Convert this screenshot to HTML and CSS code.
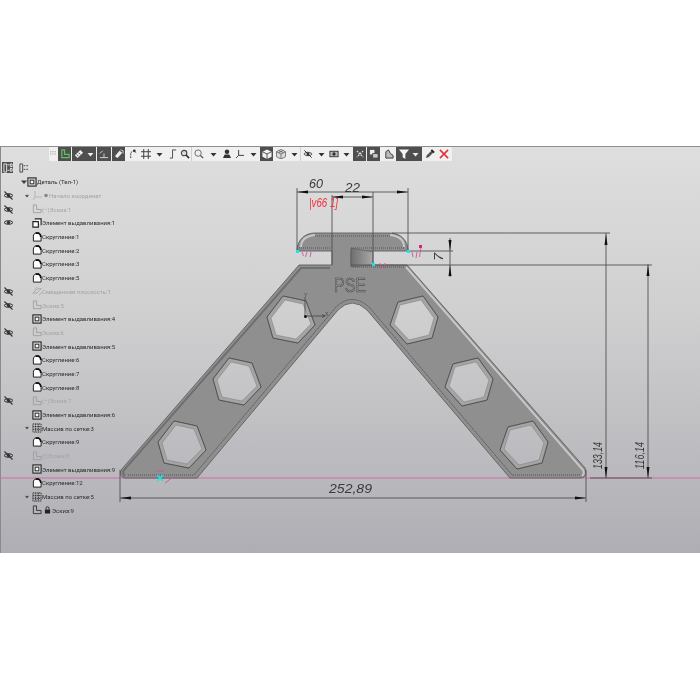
FILE: index.html
```html
<!DOCTYPE html>
<html lang="ru">
<head>
<meta charset="utf-8">
<title>Деталь</title>
<link rel="stylesheet" href="styles.css">
</head>
<body>
<svg class="defs" width="0" height="0" aria-hidden="true">
  <defs>
    <linearGradient id="slot-grad" x1="0" x2="1" y1="0" y2="0"><stop offset="0" stop-color="#6e6e6e"/><stop offset="1" stop-color="#a9a9a9"/></linearGradient>
    <symbol id="i-ext" viewBox="0 0 11 11"><rect x="1" y="1" width="9" height="9" fill="#d8d8d8" stroke="#222" stroke-width="1.200"/><rect x="3.500" y="3.500" width="4" height="4" fill="#fff" stroke="#222"/></symbol>
    <symbol id="i-ext1" viewBox="0 0 11 11"><path d="M3 1h7v7M1 4h6v6H1z" fill="#fff" stroke="#222" stroke-width="1.300"/></symbol>
    <symbol id="i-fil" viewBox="0 0 11 11"><path d="M1.500 10V4.500C1.500 2.500 3 1 5 1h2.500C9 2 10 3.500 10 5.500V10z" fill="#fff" stroke="#222" stroke-width="1.100"/><path d="M4 1.300h3.500C9 2 9.700 3.500 9.700 5.500" fill="none" stroke="#111" stroke-width="1.800"/></symbol>
    <symbol id="i-sk" viewBox="0 0 11 11"><path d="M1.500 1v8.500h8.500V6H5V1z" fill="none" stroke="currentColor" stroke-width="1"/></symbol>
    <symbol id="i-eye" viewBox="0 0 11 9"><path d="M1 4.500C3 2 8 2 10 4.500 8 7 3 7 1 4.500z" fill="none" stroke="#333"/><circle cx="5.500" cy="4.500" r="1.700" fill="#333"/></symbol>
    <symbol id="i-noeye" viewBox="0 0 11 9"><path d="M1 4.500C3 2 8 2 10 4.500 8 7 3 7 1 4.500z" fill="none" stroke="#333"/><circle cx="5.500" cy="4.500" r="1.700" fill="#333"/><path d="M1.500 .5 9.500 8.500" stroke="#333" stroke-width="1.100"/></symbol>
    <symbol id="i-grid" viewBox="0 0 11 11"><path d="M1 1h9v9H1zM4 1v9M7 1v9M1 4h9M1 7h9" fill="none" stroke="#333" stroke-dasharray="1.500 .7"/></symbol>
    <symbol id="t-caret" viewBox="0 0 7 7"><path d="M.5 2h6L3.500 5.500z" fill="#333"/></symbol>
    <symbol id="t-w-caret" viewBox="0 0 7 7"><path d="M.5 2h6L3.500 5.500z" fill="#eee"/></symbol>
    <symbol id="t-mag" viewBox="0 0 11 11"><circle cx="4.500" cy="4.500" r="3" fill="#ddd" stroke="#444" stroke-width="1.200"/><path d="M6.500 6.500 10 10" stroke="#333" stroke-width="1.800"/></symbol>
    <g id="hex-a" class="hex">
      <path class="hex-wall" fill-rule="evenodd" d="M-8-24 15-19 24 5 7 23-18 18-24-3ZM-6-20 12-16 20 4 5 19-15 15-20-2Z"/>
      <polygon class="hex-edge" points="-8,-24 15,-19 24,5 7,23 -18,18 -24,-3"/>
      <polygon class="hex-in" points="-6,-20 12,-16 20,4 5,19 -15,15 -20,-2"/>
    </g>
    <g id="hex-b" class="hex">
      <path class="hex-wall" fill-rule="evenodd" d="M-16-18 9-24 24-3 18 18-7 24-24 5ZM-14-15 7-20 20-2 15 15-5 20-20 4Z"/>
      <polygon class="hex-edge" points="-16,-18 9,-24 24,-3 18,18 -7,24 -24,5"/>
      <polygon class="hex-in" points="-14,-15 7,-20 20,-2 15,15 -5,20 -20,4"/>
    </g>
  </defs>
</svg>

<main class="window">
  <svg class="canvas" viewBox="0 146 700 407" width="700" height="407">
    <path class="pink" d="M0 478H700"/>
    <path class="part" fill-rule="evenodd" d="M125 478Q119 477 121 470L299 265H332V251H297C297 240 305 233 315 233H390C400 233 408 240 408 251H351V265H407L585 468Q588 477 581 478H510L367 310Q352 296 338 310L197 478ZM283 296 306 301 315 325 298 343 273 338 267 317ZM229 358 252 363 261 387 244 405 219 400 213 379ZM174 421 197 426 206 450 189 468 164 463 158 442ZM398 302 423 296 438 317 432 338 407 344 390 325ZM453 364 478 358 493 379 487 400 462 406 445 387ZM508 427 533 421 548 442 542 463 517 469 500 450Z"/>
    <path class="band-dark" d="M125 476Q122 473 124 470L301 268H330"/>
    <path class="band-light" d="M406 267 583 470Q585 474 582 476"/>
    <path class="band-thin" d="M194 475 336 307Q352 292 369 307L513 476"/>
    <path class="dots" d="M128 475H194M513 475H580M353 267H405M299 248H330M351 248H405M315 236H390"/>
    <path class="band-light" d="M301 247C301 240 306 236 315 235M404 247C404 240 399 236 390 235"/>
    <polygon class="slot" points="351,248 373,252 373,265 351,267"/>
    <use href="#hex-a" x="291" y="320"/>
    <use href="#hex-a" x="237" y="382"/>
    <use href="#hex-a" x="182" y="445"/>
    <use href="#hex-b" x="414" y="320"/>
    <use href="#hex-b" x="469" y="382"/>
    <use href="#hex-b" x="524" y="445"/>
    <text class="pse" x="334" y="292" textLength="32" lengthAdjust="spacingAndGlyphs">PSE</text>

    <path class="triad" d="M305 316V297M305 316H325M322 314.500l3 1.500-3 1.500"/>
    <circle class="triad-dot" cx="305.500" cy="316.500" r="1.500"/>
    <text class="triad-t" x="304" y="297">Y</text>
    <text class="triad-t" x="325" y="316">X</text>

    <path class="dim" d="M297 188V251M408 188V251M332 195V265M373 192V265M297 192H408M332 197H373"/>
    <path class="dim" d="M408 251H453M351 265H652M392 233H610M606 233V478M648 264V478M450 238V277M120 470V502M120 498H586M586 470V502M590 478H652"/>
    <path class="arrow" d="M297 192l11-1.500v3zM408 192l-11-1.500v3zM332 197l11-1.500v3zM373 197l-11-1.500v3zM606 234l-1.500 11h3zM606 478l-1.500-11h3zM648 265l-1.500 11h3zM648 478l-1.500-11h3zM450 251l-1.500-11h3zM450 265l-1.500 11h3zM120 498l11-1.500v3zM586 498l-11-1.500v3z"/>
    <text class="dimt" x="309" y="188" textLength="14" lengthAdjust="spacingAndGlyphs">60</text>
    <text class="dimt" x="345" y="192" textLength="15" lengthAdjust="spacingAndGlyphs">22</text>
    <text class="redt" x="309" y="207" textLength="29" lengthAdjust="spacingAndGlyphs">|v66 1]</text>
    <text class="dimt" x="329" y="493" textLength="43" lengthAdjust="spacingAndGlyphs">252,89</text>
    <text class="dimt" transform="translate(443 261) rotate(-90)" textLength="8" lengthAdjust="spacingAndGlyphs">7</text>
    <text class="dimt" transform="translate(602 469) rotate(-90)" textLength="27" lengthAdjust="spacingAndGlyphs">133,14</text>
    <text class="dimt" transform="translate(644 469) rotate(-90)" textLength="27" lengthAdjust="spacingAndGlyphs">116,14</text>

    <g class="marks">
      <path d="M302 252l1.500 4M307 252l-1.500 5M311 252l-1 5M380 263l1 6M385 263l-1 6M412 252l1 5M417 252l-1 6M421 247l-1.500 10M156 471h8M165 483l8-6"/>
      <rect class="mark-dot" x="419" y="245" width="3" height="3"/>
    </g>
    <rect class="cy" x="296" y="250" width="3" height="3"/>
    <rect class="cy" x="407" y="250" width="3" height="3"/>
    <rect class="cy" x="372" y="263" width="3" height="3"/>
    <path class="cyx" d="M157 475l6 6M163 475l-6 6"/>
  </svg>

  <div class="toolbar">
    <span class="tb w9"><svg class="ic" viewBox="0 0 8 8"><path d="M1 2h6M1 4h6" stroke="#999" stroke-dasharray="1 1"/></svg></span>
    <span class="tb w14 dark"><svg class="ic" viewBox="0 0 11 11"><path d="M2 1v8.500h8V6H5V1z" fill="none" stroke="#5fc060" stroke-width="1.300"/></svg></span>
    <span class="tb w25 dark"><svg class="ic" viewBox="0 0 11 11"><path d="M1 7 7 1l3 3-6 6z" fill="#eee"/><path d="M3 6l2 2M5 4l2 2" stroke="#444"/></svg><svg class="car" viewBox="0 0 7 7"><use href="#t-w-caret"/></svg></span>
    <span class="tb w15 dark"><svg class="ic" viewBox="0 0 11 11"><path d="M1 9.500h9M5.500 9.500V5M1 5l3-3" stroke="#ddd" fill="none"/></svg></span>
    <span class="tb w14 dark"><svg class="ic" viewBox="0 0 11 11"><path d="M1 8 6 2l3 2-5 6z" fill="#eee"/><path d="M7 1l3 1v3" stroke="#ccc" fill="none"/></svg></span>
    <span class="tb w13"><svg class="ic" viewBox="0 0 11 11"><path d="M3 10V4l3-2 3 2" fill="none" stroke="#333" stroke-dasharray="2 1"/><circle cx="7" cy="2" r="1.500" fill="#333"/></svg></span>
    <span class="tb w13"><svg class="ic" viewBox="0 0 11 11"><path d="M3 0v11M8 0v11M0 3h11M0 8h11" stroke="#333"/></svg></span>
    <span class="tb w14"><svg class="car" viewBox="0 0 7 7"><use href="#t-caret"/></svg></span>
    <span class="tb w13"><svg class="ic" viewBox="0 0 11 11"><path d="M2 10h3V1h4" fill="none" stroke="#444"/></svg></span>
    <span class="tb w13 sep"><svg class="ic" viewBox="0 0 11 11"><use href="#t-mag"/></svg></span>
    <span class="tb w14"><svg class="ic" viewBox="0 0 11 11"><circle cx="4.500" cy="4.500" r="3.500" fill="#eee" stroke="#666"/><path d="M7 7l3 3" stroke="#555" stroke-width="1.500"/></svg></span>
    <span class="tb w14"><svg class="car" viewBox="0 0 7 7"><use href="#t-caret"/></svg></span>
    <span class="tb w13"><svg class="ic" viewBox="0 0 11 11"><path d="M1 10h9L8 6H3z" fill="#333"/><circle cx="5.500" cy="3" r="2.500" fill="#333"/></svg></span>
    <span class="tb w13"><svg class="ic" viewBox="0 0 11 11"><path d="M4 1v6M4 7l-3 3M4 7h6" fill="none" stroke="#333"/></svg></span>
    <span class="tb w14"><svg class="car" viewBox="0 0 7 7"><use href="#t-caret"/></svg></span>
    <span class="tb w14 dark"><svg class="ic" viewBox="0 0 11 11"><path d="M5.500 .5 10.500 3v5.500l-5 2.500-5-2.500V3z" fill="#f2f2f2"/><path d="M.5 3l5 2.500 5-2.500M5.500 5.500V11" stroke="#444" fill="none"/></svg></span>
    <span class="tb w14"><svg class="ic" viewBox="0 0 11 11"><path d="M5.500 .5 10.500 3v5.500l-5 2.500-5-2.500V3zM.5 3l5 2.500 5-2.500M5.500 5.500V11M3 1.700l5 2.500M8 1.700 3 4.200" stroke="#555" fill="#ddd" stroke-width=".8"/></svg></span>
    <span class="tb w13 sep"><svg class="car" viewBox="0 0 7 7"><use href="#t-caret"/></svg></span>
    <span class="tb w14"><svg class="ic" viewBox="0 0 11 11"><use href="#i-noeye"/></svg></span>
    <span class="tb w12"><svg class="car" viewBox="0 0 7 7"><use href="#t-caret"/></svg></span>
    <span class="tb w13"><svg class="ic" viewBox="0 0 11 11"><rect x="1" y="2.500" width="9" height="6" fill="#bbb" stroke="#333"/><circle cx="5.500" cy="5.500" r="1.800" fill="#333"/></svg></span>
    <span class="tb w13"><svg class="car" viewBox="0 0 7 7"><use href="#t-caret"/></svg></span>
    <span class="tb w14 dark"><svg class="ic" viewBox="0 0 11 11"><path d="M2 2l7 7M9 2 2 9" stroke="#ddd" stroke-dasharray="2 1" stroke-width="1.300"/></svg></span>
    <span class="tb w14 dark"><svg class="ic" viewBox="0 0 11 11"><path d="M1 1h5v5H1z" fill="#eee"/><path d="M4 5h6v5H4z" fill="#ccc" stroke="#444"/></svg></span>
    <span class="tb w15"><svg class="ic" viewBox="0 0 11 11"><path d="M2 10V3l3-2 2 4 3 2v3z" fill="#bbb" stroke="#333"/></svg></span>
    <span class="tb w27 dark"><svg class="ic" viewBox="0 0 11 11"><path d="M0 .5h11L7 5.500V11L4 9V5.500z" fill="#f4f4f4"/></svg><svg class="car" viewBox="0 0 7 7"><use href="#t-w-caret"/></svg></span>
    <span class="tb w14"><svg class="ic" viewBox="0 0 11 11"><path d="M1 10l1-3 5-5 2 2-5 5z" fill="#555"/><path d="M7 1l3 3" stroke="#222" stroke-width="2"/></svg></span>
    <span class="tb w14"><svg class="ic" viewBox="0 0 11 11"><path d="M1 1l9 9M10 1 1 10" stroke="#e8303a" stroke-width="1.700"/></svg></span>
  </div>

  <div class="tabs">
    <span class="tab on"><svg class="ic" viewBox="0 0 11 11"><path d="M1 1h3v9H1zM5 2h2M8 1h2v3H8zM8 6h2v3H8zM5 8h2" fill="none" stroke="#eee"/></svg></span>
    <span class="tab"><svg class="ic" viewBox="0 0 11 11"><path d="M1 1h3v9H1zM5 3h2M5 7h2M8 3h2M8 7h2" fill="none" stroke="#444"/></svg></span>
  </div>

  <ul class="tree">
    <li class="row root"><span class="eye"></span><span class="slot"><svg class="caret" viewBox="0 0 7 7"><use href="#t-caret"/></svg></span><svg class="ti" viewBox="0 0 11 11"><use href="#i-ext"/></svg><span>Деталь (Тел-1)</span></li>
    <li class="row off"><span class="eye"><svg viewBox="0 0 11 9"><use href="#i-noeye"/></svg></span><span class="slot sub"><svg class="caret small" viewBox="0 0 7 7"><use href="#t-caret"/></svg></span><svg class="ti wide" viewBox="0 0 17 11"><path d="M3 1v6M3 7l-2 3M3 7h7" fill="none" stroke="#b5b5b5"/><circle cx="14" cy="5.500" r="1.800" fill="#888"/></svg><span>Начало координат</span></li>
    <li class="row off"><span class="eye"><svg viewBox="0 0 11 9"><use href="#i-noeye"/></svg></span><span class="slot"></span><svg class="ti" viewBox="0 0 11 11"><use href="#i-sk"/></svg><span>(−)Эскиз:1</span></li>
    <li class="row"><span class="eye"><svg viewBox="0 0 11 9"><use href="#i-eye"/></svg></span><span class="slot"></span><svg class="ti" viewBox="0 0 11 11"><use href="#i-ext1"/></svg><span>Элемент выдавливания:1</span></li>
    <li class="row"><span class="eye"></span><span class="slot"></span><svg class="ti" viewBox="0 0 11 11"><use href="#i-fil"/></svg><span>Скругление:1</span></li>
    <li class="row"><span class="eye"></span><span class="slot"></span><svg class="ti" viewBox="0 0 11 11"><use href="#i-fil"/></svg><span>Скругление:2</span></li>
    <li class="row"><span class="eye"></span><span class="slot"></span><svg class="ti" viewBox="0 0 11 11"><use href="#i-fil"/></svg><span>Скругление:3</span></li>
    <li class="row"><span class="eye"></span><span class="slot"></span><svg class="ti" viewBox="0 0 11 11"><use href="#i-fil"/></svg><span>Скругление:5</span></li>
    <li class="row off"><span class="eye"><svg viewBox="0 0 11 9"><use href="#i-noeye"/></svg></span><span class="slot"></span><svg class="ti" viewBox="0 0 11 11"><path d="M1 8 6 3h4L5 8zM3 4l3-3M8 10l3-3" fill="none" stroke="#999" stroke-dasharray="1.500 .5"/></svg><span>Смещенная плоскость:1</span></li>
    <li class="row off"><span class="eye"><svg viewBox="0 0 11 9"><use href="#i-noeye"/></svg></span><span class="slot"></span><svg class="ti" viewBox="0 0 11 11"><use href="#i-sk"/></svg><span>Эскиз:5</span></li>
    <li class="row"><span class="eye"></span><span class="slot"></span><svg class="ti" viewBox="0 0 11 11"><use href="#i-ext"/></svg><span>Элемент выдавливания:4</span></li>
    <li class="row off"><span class="eye"><svg viewBox="0 0 11 9"><use href="#i-noeye"/></svg></span><span class="slot"></span><svg class="ti" viewBox="0 0 11 11"><use href="#i-sk"/></svg><span>Эскиз:6</span></li>
    <li class="row"><span class="eye"></span><span class="slot"></span><svg class="ti" viewBox="0 0 11 11"><use href="#i-ext"/></svg><span>Элемент выдавливания:5</span></li>
    <li class="row"><span class="eye"></span><span class="slot"></span><svg class="ti" viewBox="0 0 11 11"><use href="#i-fil"/></svg><span>Скругление:6</span></li>
    <li class="row"><span class="eye"></span><span class="slot"></span><svg class="ti" viewBox="0 0 11 11"><use href="#i-fil"/></svg><span>Скругление:7</span></li>
    <li class="row"><span class="eye"></span><span class="slot"></span><svg class="ti" viewBox="0 0 11 11"><use href="#i-fil"/></svg><span>Скругление:8</span></li>
    <li class="row off"><span class="eye"><svg viewBox="0 0 11 9"><use href="#i-noeye"/></svg></span><span class="slot"></span><svg class="ti" viewBox="0 0 11 11"><use href="#i-sk"/></svg><span>(−)Эскиз:7</span></li>
    <li class="row"><span class="eye"></span><span class="slot"></span><svg class="ti" viewBox="0 0 11 11"><use href="#i-ext"/></svg><span>Элемент выдавливания:6</span></li>
    <li class="row"><span class="eye"></span><span class="slot sub"><svg class="caret small" viewBox="0 0 7 7"><use href="#t-caret"/></svg></span><svg class="ti" viewBox="0 0 11 11"><use href="#i-grid"/></svg><span>Массив по сетке:3</span></li>
    <li class="row"><span class="eye"></span><span class="slot"></span><svg class="ti" viewBox="0 0 11 11"><use href="#i-fil"/></svg><span>Скругление:9</span></li>
    <li class="row off"><span class="eye"><svg viewBox="0 0 11 9"><use href="#i-noeye"/></svg></span><span class="slot"></span><svg class="ti" viewBox="0 0 11 11"><use href="#i-sk"/></svg><span>(!)Эскиз:8</span></li>
    <li class="row"><span class="eye"></span><span class="slot"></span><svg class="ti" viewBox="0 0 11 11"><use href="#i-ext"/></svg><span>Элемент выдавливания:9</span></li>
    <li class="row"><span class="eye"></span><span class="slot"></span><svg class="ti" viewBox="0 0 11 11"><use href="#i-fil"/></svg><span>Скругление:12</span></li>
    <li class="row"><span class="eye"></span><span class="slot sub"><svg class="caret small" viewBox="0 0 7 7"><use href="#t-caret"/></svg></span><svg class="ti" viewBox="0 0 11 11"><use href="#i-grid"/></svg><span>Массив по сетке:5</span></li>
    <li class="row"><span class="eye"></span><span class="slot"></span><svg class="ti" viewBox="0 0 11 11"><use href="#i-sk"/></svg><svg class="lock" viewBox="0 0 8 9"><path d="M1 4h6v4.500H1z" fill="#222"/><path d="M2.300 4V2.500a1.700 1.700 0 0 1 3.400 0V4" fill="none" stroke="#222"/></svg><span>Эскиз:9</span></li>
  </ul>
</main>
</body>
</html>
```

FILE: styles.css
```css
* { box-sizing: border-box; }
html, body { margin: 0; padding: 0; background: #fff; }
body { height: 700px; overflow: hidden; padding-top: 146px; font-family: Roboto, "Noto Sans", sans-serif; }
.defs { position: absolute; }

.window {
  position: relative;
  height: 407px;
  background: linear-gradient(180deg, #dedede 0%, #d0d0d1 40%, #aeaeb4 100%);
  border-top: 1px solid #8e8e8e;
  border-left: 1px solid #8a8a8a;
  filter: blur(.45px);
}
.canvas { position: absolute; left: -1px; top: -1px; display: block; }

/* part */
.pink { stroke: #cf6fa6; stroke-width: 1; fill: none; }
.part { fill: #8f8f8f; stroke: #5f5f5f; stroke-width: .9; }
.band-dark { fill: none; stroke: #6f6f6f; stroke-width: 2; }
.band-thin { fill: none; stroke: #555; stroke-width: .9; stroke-dasharray: 1.500 .6; }
.band-light { fill: none; stroke: #c8c8c8; stroke-width: 2; }
.dots { fill: none; stroke: #444; stroke-width: .8; stroke-dasharray: 1 1; }
.slot { fill: url(#slot-grad); stroke: #555; stroke-width: .6; }
.hex-wall { fill: #a4a4a4; }
.hex-edge { fill: none; stroke: #4e4e4e; stroke-width: .9; }
.hex-in { fill: none; stroke: #7a7a7a; stroke-width: .5; }
.pse { font: 21px "Liberation Sans", sans-serif; fill: #8f8f8f; stroke: #3f3f3f; stroke-width: .7; stroke-dasharray: 1.500 .5; }

/* sketch annotations */
.triad { fill: none; stroke: #444; stroke-width: .8; }
.triad-dot { fill: #111; }
.triad-t { font: 5px "Liberation Sans", sans-serif; fill: #444; }
.dim { fill: none; stroke: #505050; stroke-width: .9; }
.arrow { fill: #111; }
.dimt { font: italic 13px "Liberation Sans", sans-serif; fill: #3a3a3a; }
.redt { font: italic 12px "Liberation Sans", sans-serif; fill: #f0333d; }
.marks { fill: none; stroke: #d0509c; stroke-width: .9; }
.mark-dot { fill: #d0257f; stroke: none; }
.cy { fill: #17e6ea; }
.cyx { fill: none; stroke: #17e6ea; stroke-width: 1.500; }

/* toolbar */
.toolbar {
  position: relative;
  display: flex;
  height: 14px;
  width: 403px;
  margin-left: 48px;
  background: #f0f0f0;
}
.tb { display: flex; align-items: center; justify-content: center; gap: 3px; height: 14px; flex: none; }
.tb.dark { background: #4f4f4f; border-right: 1px solid #f0f0f0; }
.tb.sep { border-right: 1px solid #cfcfcf; }
.ic { width: 10px; height: 10px; display: block; }
.car { width: 7px; height: 7px; display: block; }
.w9 { width: 9px; } .w12 { width: 12px; } .w13 { width: 13px; } .w14 { width: 14px; }
.w15 { width: 15px; } .w25 { width: 25px; } .w27 { width: 27px; }

/* tabs */
.tabs { position: relative; display: flex; gap: 5px; padding: 1px 0 0 1px; height: 14px; }
.tab { width: 11px; height: 11px; display: flex; align-items: center; justify-content: center; }
.tab.on { background: #4f4f4f; }

/* tree */
.tree { position: relative; list-style: none; margin: 0; padding: 0; width: 125px; }
.row { display: flex; align-items: center; height: 13.7px; font-size: 6px; color: #2c2c2c; white-space: nowrap; }
.row.off { color: #a3a3a6; }
.row.off .ti { color: #9f9f9f; }
.row .ti { color: #333; }
.eye { width: 14px; flex: none; display: flex; align-items: center; justify-content: center; }
.eye svg { width: 11px; height: 9px; display: block; }
.slot { width: 17px; flex: none; display: flex; justify-content: flex-start; align-items: center; }
.root .slot { width: 12px; padding-left: 6px; }
.slot.sub { padding-left: 10px; }
.caret { width: 6px; height: 6px; display: block; }
.caret.small { width: 4px; height: 4px; }
.ti { width: 10px; height: 10px; flex: none; display: block; }
.ti.wide { width: 17px; height: 11px; }
.lock { width: 7px; height: 8px; flex: none; margin: 0 1px 0 2px; display: block; }
```
